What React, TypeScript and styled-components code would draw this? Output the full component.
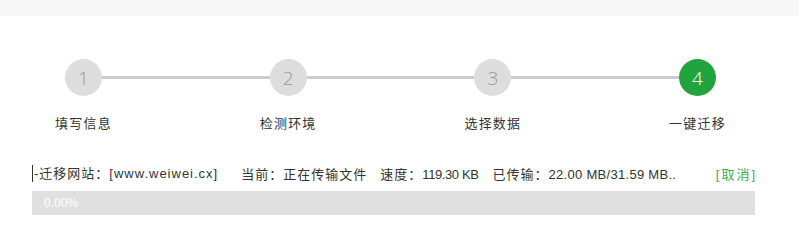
import React from "react";
import styled, { createGlobalStyle } from "styled-components";

const Global = createGlobalStyle`
  html, body { margin: 0; padding: 0; background: #fff; }
  body { font-family: "Liberation Sans", "Noto Sans CJK SC", sans-serif; color: #333; }
`;

const TopBar = styled.div`
  height: 16px;
  background: #f7f7f7;
`;

const Steps = styled.div`
  display: flex;
  align-items: flex-start;
  width: 651px;
  margin: 43px 0 0 65px;
`;

const Step = styled.div`
  width: 37px;
  display: flex;
  flex-direction: column;
  align-items: center;
`;

const Circle = styled.div<{ $active?: boolean }>`
  width: 37px;
  height: 37px;
  border-radius: 50%;
  background: ${(p) => (p.$active ? "#21a33d" : "#dddddd")};
  color: ${(p) => (p.$active ? "#ffffff" : "#999999")};
  display: flex;
  align-items: center;
  justify-content: center;
  font-family: "Open Sans", "Liberation Sans", sans-serif;
  font-weight: 300;
  font-size: 19px;
`;

const Label = styled.div`
  margin-top: 19px;
  white-space: nowrap;
  font-family: "Noto Sans CJK SC", sans-serif;
  font-size: 13px;
  letter-spacing: 1.2px;
  line-height: 16px;
  color: #333;
`;

const Connector = styled.div`
  flex: 1;
  height: 3px;
  margin-top: 17px;
  background: #cccccc;
`;

const Status = styled.div`
  display: flex;
  align-items: center;
  margin: 34px 44px 0 32px;
  height: 17px;
  font-size: 13px;
  letter-spacing: 1px;
  white-space: nowrap;
  color: #333;
`;

const Item = styled.span<{ $gap?: number; $bar?: boolean }>`
  margin-left: ${(p) => p.$gap ?? 0}px;
  ${(p) => (p.$bar ? "border-left: 1px solid #333; padding-left: 1px; line-height: 17px;" : "")}
`;

const Num = styled.span<{ $ls?: number }>`
  letter-spacing: ${(p) => p.$ls ?? 0}px;
`;

const Cancel = styled.span`
  margin-left: auto;
  color: #3dab4e;
  letter-spacing: 2px;
  margin-right: -2px;
  cursor: pointer;
`;

const Bar = styled.div`
  margin: 9px 44px 0 32px;
  height: 24px;
  background: #e0e0e0;
  position: relative;
`;

const Fill = styled.div`
  height: 100%;
  background: #21a33d;
`;

const Percent = styled.span`
  position: absolute;
  left: 12px;
  top: 0;
  line-height: 24px;
  font-size: 12px;
  color: #fff;
`;

const steps = ["填写信息", "检测环境", "选择数据", "一键迁移"];

export default function App() {
  const progress = 0;
  return (
    <>
      <Global />
      <TopBar />
      <Steps>
        {steps.map((s, i) => (
          <React.Fragment key={s}>
            {i > 0 && <Connector />}
            <Step>
              <Circle $active={i === 3}>{i + 1}</Circle>
              <Label>{s}</Label>
            </Step>
          </React.Fragment>
        ))}
      </Steps>
      <Status>
        <Item $bar>-迁移网站：[www.weiwei.cx]</Item>
        <Item $gap={23}>当前：正在传输文件</Item>
        <Item $gap={13}>速度：<Num $ls={-0.4}>119.30 KB</Num></Item>
        <Item $gap={14}>已传输：<Num $ls={0.3}>22.00 MB/31.59 MB..</Num></Item>
        <Cancel>[取消]</Cancel>
      </Status>
      <Bar>
        <Fill style={{ width: `${progress}%` }} />
        <Percent>0.00%</Percent>
      </Bar>
    </>
  );
}
